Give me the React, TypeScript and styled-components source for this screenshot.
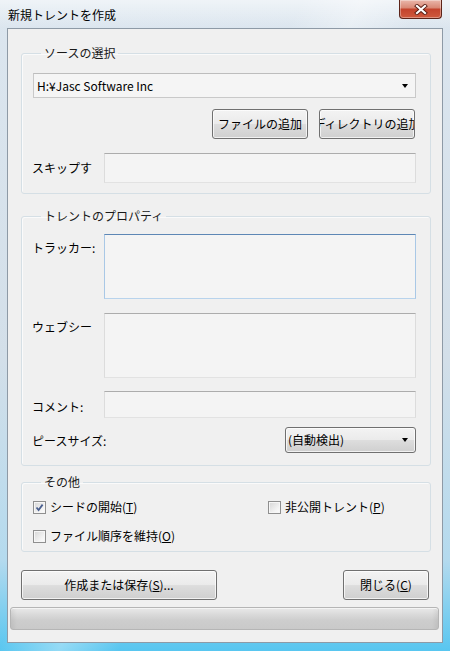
import React from 'react';
import styled, { createGlobalStyle, css } from 'styled-components';

const uiFont = `"Noto Sans CJK JP", "Noto Sans", sans-serif`;

const GlobalStyle = createGlobalStyle`
  html, body {
    margin: 0;
    padding: 0;
  }
  body {
    font-family: ${uiFont};
    font-size: 12px;
    color: #000;
  }
  *, *::before, *::after {
    box-sizing: border-box;
  }
`;

const Window = styled.div`
  width: 450px;
  height: 651px;
  display: flex;
  flex-direction: column;
  overflow: hidden;
  background:
    linear-gradient(180deg, rgba(255, 255, 255, 0.55) 0, rgba(255, 255, 255, 0) 28px),
    linear-gradient(115deg, rgba(255, 255, 255, 0) 40%, rgba(255, 255, 255, 0.35) 48%, rgba(255, 255, 255, 0) 56%),
    linear-gradient(180deg, #dce6ef 0%, #d3dfe9 55%, #b4daee 86%, #58c6f0 100%);
`;

const TitleBar = styled.div`
  height: 28px;
  flex-shrink: 0;
  display: flex;
  align-items: flex-start;
  justify-content: space-between;
  padding: 0 8px;
`;

const Title = styled.span`
  margin-top: 7px;
  font-size: 12px;
  line-height: 16px;
  color: #000;
`;

const CloseButton = styled.button`
  width: 43px;
  height: 19px;
  padding: 0;
  border: 1px solid #5c2419;
  border-top: none;
  border-radius: 0 0 4px 4px;
  background: linear-gradient(180deg, #eab7ab 0%, #d98a77 42%, #c4442d 52%, #cf5a3e 100%);
  box-shadow: inset 0 0 0 1px rgba(255, 255, 255, 0.35);
  display: flex;
  align-items: center;
  justify-content: center;
`;

const Client = styled.div`
  flex: 1;
  margin: 0 7px 8px;
  border: 1px solid #8e9aa6;
  background: #f0f0f0;
  display: flex;
  flex-direction: column;
`;

const Body = styled.div`
  padding: 16px 11px 0 13px;
  display: flex;
  flex-direction: column;
`;

const Group = styled.fieldset<{ $mt?: number; $pad: string }>`
  margin: ${({ $mt }) => $mt ?? 0}px 0 0;
  padding: ${({ $pad }) => $pad};
  min-width: 0;
  border: 1px solid #d5dfe5;
  border-radius: 3px;
  box-shadow: inset 1px 1px 0 #fafafa;
`;

const Legend = styled.legend`
  margin-left: 8px;
  padding: 0 3px;
  font-size: 12px;
  line-height: 16px;
  color: #1a1a1a;
`;

const Arrow = styled.span`
  width: 0;
  height: 0;
  border-left: 3.5px solid transparent;
  border-right: 3.5px solid transparent;
  border-top: 4px solid #000;
`;

const Combo = styled.div`
  height: 25px;
  display: flex;
  align-items: center;
  justify-content: space-between;
  padding: 0 7px 0 3px;
  border: 1px solid #c9c9c9;
  border-top-color: #bdbdbd;
  background: #f5f5f5;
  line-height: 16px;
`;

const ButtonRow = styled.div`
  margin: 11px 1px 0 0;
  display: flex;
  justify-content: flex-end;
  gap: 11px;
`;

const buttonFace = css`
  border: 1px solid #707070;
  border-radius: 3px;
  background: linear-gradient(180deg, #f3f3f3 0%, #ebebeb 48%, #dddddd 52%, #cfcfcf 100%);
  box-shadow: inset 0 0 0 1px rgba(255, 255, 255, 0.7);
`;

const Button = styled.button<{ $w: number }>`
  ${buttonFace};
  width: ${({ $w }) => $w}px;
  height: 30px;
  padding: 0;
  display: flex;
  align-items: center;
  justify-content: center;
  overflow: hidden;
  white-space: nowrap;
  font-family: ${uiFont};
  font-size: 12px;
  line-height: 16px;
  color: #000;
`;

const FieldRow = styled.div<{ $mt: number; $top?: boolean }>`
  margin-top: ${({ $mt }) => $mt}px;
  display: grid;
  grid-template-columns: 71px 1fr;
  align-items: ${({ $top }) => ($top ? 'start' : 'center')};
`;

const Label = styled.span<{ $pt?: number }>`
  line-height: 16px;
  padding-top: ${({ $pt }) => $pt ?? 0}px;
  margin-left: -1px;
  white-space: nowrap;
`;

const TextBox = styled.div<{ $h: number; $focused?: boolean }>`
  height: ${({ $h }) => $h}px;
  background: #f4f4f4;
  border: 1px solid;
  border-color: ${({ $focused }) =>
    $focused ? '#5d87b5 #a9c8e6 #b8d3ec #a9c8e6' : '#acacac #dcdcdc #e2e2e2 #dcdcdc'};
`;

const SelectRow = styled.div`
  margin-top: 9px;
  display: flex;
  align-items: center;
  justify-content: space-between;
`;

const Select = styled.div`
  ${buttonFace};
  width: 131px;
  height: 26px;
  padding: 0 7px 0 2px;
  display: flex;
  align-items: center;
  justify-content: space-between;
  line-height: 16px;
`;

const CheckGrid = styled.div`
  display: grid;
  grid-template-columns: 235px 1fr;
  row-gap: 13px;
`;

const CheckItem = styled.label`
  display: flex;
  align-items: center;
  gap: 4px;
  height: 16px;
  line-height: 16px;
  white-space: nowrap;
`;

const Box = styled.span`
  width: 13px;
  height: 13px;
  flex-shrink: 0;
  border: 1px solid #8f8f8f;
  background: linear-gradient(135deg, #d6d6d6 0%, #f4f4f4 70%, #fdfdfd 100%);
  box-shadow: inset 0 0 0 1px #f6f6f6;
  display: flex;
  align-items: center;
  justify-content: center;
`;

const Footer = styled.div`
  margin: 18px 2px 0 0;
  display: flex;
  justify-content: space-between;
`;

const Progress = styled.div`
  margin: 7px 3px 0 2px;
  height: 23px;
  border: 1px solid #b5b5b5;
  border-radius: 3px;
  background:
    linear-gradient(90deg, rgba(0, 0, 0, 0.06) 0, rgba(0, 0, 0, 0) 6px, rgba(0, 0, 0, 0) calc(100% - 6px), rgba(0, 0, 0, 0.06) 100%),
    linear-gradient(180deg, #e9e9e9 0%, #dadada 30%, #cdcdcd 60%, #c9c9c9 100%);
  box-shadow: inset 0 1px 0 #f4f4f4;
`;

const Check = ({ checked, children }: { checked?: boolean; children: React.ReactNode }) => (
  <CheckItem>
    <Box>
      {checked && (
        <svg width="9" height="9" viewBox="0 0 9 9">
          <path d="M1.5 4.5 L3.6 7 L7.6 1.6" fill="none" stroke="#4a5f8f" strokeWidth="1.8" />
        </svg>
      )}
    </Box>
    <span>{children}</span>
  </CheckItem>
);

export default function App() {
  return (
    <>
      <GlobalStyle />
      <Window>
        <TitleBar>
          <Title>新規トレントを作成</Title>
          <CloseButton aria-label="閉じる">
            <svg width="14" height="11" viewBox="0 0 14 11">
              <path d="M3 2 L11 9 M11 2 L3 9" stroke="#5a1e14" strokeWidth="4" strokeLinecap="square" />
              <path d="M3 2 L11 9 M11 2 L3 9" stroke="#ffffff" strokeWidth="2.2" strokeLinecap="square" />
            </svg>
          </CloseButton>
        </TitleBar>
        <Client>
          <Body>
            <Group $pad="12px 14px 10px 11px">
              <Legend>ソースの選択</Legend>
              <Combo>
                <span>H:¥Jasc Software Inc</span>
                <Arrow />
              </Combo>
              <ButtonRow>
                <Button $w={96}>ファイルの追加</Button>
                <Button $w={96}>ディレクトリの追加</Button>
              </ButtonRow>
              <FieldRow $mt={14}>
                <Label>スキップす</Label>
                <TextBox $h={30} />
              </FieldRow>
            </Group>

            <Group $mt={14} $pad="10px 14px 12px 11px">
              <Legend>トレントのプロパティ</Legend>
              <FieldRow $mt={0} $top>
                <Label $pt={6}>トラッカー:</Label>
                <TextBox $h={65} $focused />
              </FieldRow>
              <FieldRow $mt={14} $top>
                <Label $pt={6}>ウェブシー</Label>
                <TextBox $h={65} />
              </FieldRow>
              <FieldRow $mt={13}>
                <Label $pt={4}>コメント:</Label>
                <TextBox $h={27} />
              </FieldRow>
              <SelectRow>
                <Label $pt={2}>ピースサイズ:</Label>
                <Select>
                  <span>(自動検出)</span>
                  <Arrow />
                </Select>
              </SelectRow>
            </Group>

            <Group $mt={8} $pad="9px 14px 7px 11px">
              <Legend>その他</Legend>
              <CheckGrid>
                <Check checked>
                  シードの開始(<u>T</u>)
                </Check>
                <Check>
                  非公開トレント(<u>P</u>)
                </Check>
                <Check>
                  ファイル順序を維持(<u>O</u>)
                </Check>
              </CheckGrid>
            </Group>

            <Footer>
              <Button $w={196}>
                作成または保存(<u>S</u>)...
              </Button>
              <Button $w={86}>
                閉じる(<u>C</u>)
              </Button>
            </Footer>
          </Body>
          <Progress />
        </Client>
      </Window>
    </>
  );
}
